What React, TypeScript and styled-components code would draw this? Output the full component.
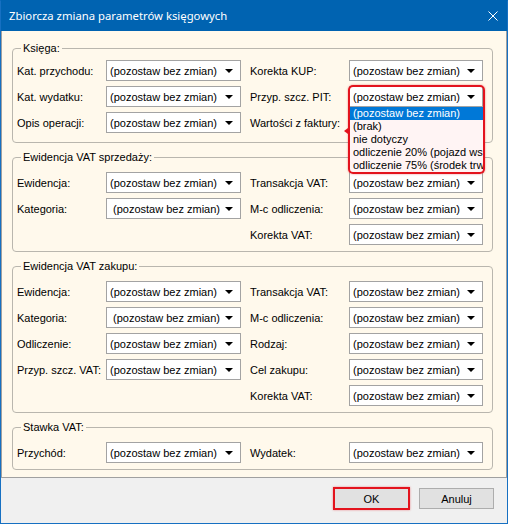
import { FC } from 'react'
import styled, { createGlobalStyle } from 'styled-components'

const KEEP = '(pozostaw bez zmian)'

type FieldDef = { label: string; indent?: boolean; open?: boolean } | null

type GroupDef = { title: string; top?: number; rows: [FieldDef, FieldDef][] }

const GROUPS: GroupDef[] = [
	{
		title: 'Księga:',
		top: 5,
		rows: [
			[{ label: 'Kat. przychodu:' }, { label: 'Korekta KUP:' }],
			[{ label: 'Kat. wydatku:' }, { label: 'Przyp. szcz. PIT:', open: true }],
			[{ label: 'Opis operacji:' }, { label: 'Wartości z faktury:' }],
		],
	},
	{
		title: 'Ewidencja VAT sprzedaży:',
		rows: [
			[{ label: 'Ewidencja:' }, { label: 'Transakcja VAT:' }],
			[{ label: 'Kategoria:', indent: true }, { label: 'M-c odliczenia:' }],
			[null, { label: 'Korekta VAT:' }],
		],
	},
	{
		title: 'Ewidencja VAT zakupu:',
		rows: [
			[{ label: 'Ewidencja:' }, { label: 'Transakcja VAT:' }],
			[{ label: 'Kategoria:', indent: true }, { label: 'M-c odliczenia:' }],
			[{ label: 'Odliczenie:' }, { label: 'Rodzaj:' }],
			[{ label: 'Przyp. szcz. VAT:' }, { label: 'Cel zakupu:' }],
			[null, { label: 'Korekta VAT:' }],
		],
	},
	{
		title: 'Stawka VAT:',
		rows: [[{ label: 'Przychód:' }, { label: 'Wydatek:' }]],
	},
]

const PIT_OPTIONS = [
	'(pozostaw bez zmian)',
	'(brak)',
	'nie dotyczy',
	'odliczenie 20% (pojazd współużytkowany)',
	'odliczenie 75% (środek trwały)',
]

const GlobalStyle = createGlobalStyle`
	html, body {
		margin: 0;
		padding: 0;
		background: #ffffff;
	}
	* {
		box-sizing: border-box;
	}
`

const Field: FC<{ def: FieldDef; right?: boolean }> = ({ def, right }) => {
	if (!def) return <div />

	return (
		<FieldRow>
			<Label $width={right ? 99 : 89}>{def.label}</Label>
			<Combo $width={right ? 134 : 135} $indent={def.indent}>
				<ComboText>{KEEP}</ComboText>
				<Arrow />
				{def.open && (
					<>
						<DropList>
							{PIT_OPTIONS.map((option, i) => (
								<DropItem key={option} $selected={i === 0}>
									{option}
								</DropItem>
							))}
						</DropList>
						<Marker />
					</>
				)}
			</Combo>
		</FieldRow>
	)
}

const App: FC = () => {
	return (
		<>
			<GlobalStyle />
			<Window>
				<TitleBar>
					<Title>Zbiorcza zmiana parametrów księgowych</Title>
					<svg width="10" height="10" viewBox="0 0 10 10">
						<path d="M0.5 0.5 L9.5 9.5 M9.5 0.5 L0.5 9.5" stroke="#ffffff" strokeWidth="1" />
					</svg>
				</TitleBar>
				<Panel>
					{GROUPS.map((group) => (
						<Group key={group.title} $top={group.top ?? 8}>
							<Legend>{group.title}</Legend>
							<FieldGrid>
								{group.rows.map(([left, right], i) => (
									<Row key={i}>
										<Field def={left} />
										<Field def={right} right />
									</Row>
								))}
							</FieldGrid>
						</Group>
					))}
				</Panel>
				<Footer>
					<Button $marked>OK</Button>
					<Button>Anuluj</Button>
				</Footer>
			</Window>
		</>
	)
}

const Window = styled.div`
	width: 508px;
	height: 524px;
	border: 1px solid #1670c2;
	border-top-color: #0063b1;
	display: flex;
	flex-direction: column;
	font-family: 'Liberation Sans', Arial, sans-serif;
	font-size: 11px;
	color: #000000;
`

const TitleBar = styled.div`
	height: 30px;
	flex: none;
	background: #0063b1;
	display: flex;
	align-items: center;
	justify-content: space-between;
	padding: 0 9px 1px 8px;
`

const Title = styled.div`
	font-family: 'Noto Sans', 'Open Sans', sans-serif;
	font-size: 11.3px;
	color: #ffffff;
`

const Panel = styled.div`
	flex: 1;
	background: #fff9ec;
	border: 1px solid #a0a0a0;
	border-top: none;
	padding: 10px 13px 0 10px;
	display: flex;
	flex-direction: column;
	gap: 7px;
`

const Group = styled.fieldset<{ $top: number }>`
	margin: 0;
	width: 481px;
	border: 1px solid #b9b6ae;
	border-radius: 4px;
	padding: ${(p) => p.$top}px 9px ${(p) => 14 - p.$top}px 4px;
	min-width: 0;
`

const Legend = styled.legend`
	margin-left: 4px;
	padding: 0 2px;
	line-height: 14px;
	font-size: 11px;
`

const FieldGrid = styled.div`
	display: flex;
	flex-direction: column;
	gap: 5px;
`

const Row = styled.div`
	display: grid;
	grid-template-columns: 224px 233px;
	column-gap: 9px;
`

const FieldRow = styled.div`
	display: flex;
	align-items: center;
	height: 21px;
`

const Label = styled.div<{ $width: number }>`
	width: ${(p) => p.$width}px;
	flex: none;
	white-space: nowrap;
`

const Combo = styled.div<{ $width: number; $indent?: boolean }>`
	position: relative;
	width: ${(p) => p.$width}px;
	height: 21px;
	flex: none;
	background: #ffffff;
	border: 1px solid #a3a3a3;
	display: flex;
	align-items: center;
	padding-left: ${(p) => (p.$indent ? 6 : 3)}px;
	padding-right: 7px;
`

const ComboText = styled.div`
	flex: 1;
	white-space: nowrap;
	overflow: hidden;
`

const Arrow = styled.div`
	width: 0;
	height: 0;
	border-left: 4px solid transparent;
	border-right: 4px solid transparent;
	border-top: 4px solid #000000;
	margin-top: 1px;
`

const DropList = styled.div`
	position: absolute;
	top: 20px;
	left: -1px;
	width: 135px;
	background: #fff4f4;
	border-bottom: 1px solid #c8a0a0;
	overflow: hidden;
	z-index: 5;
`

const DropItem = styled.div<{ $selected?: boolean }>`
	height: 13px;
	line-height: 13px;
	padding-left: 4px;
	white-space: nowrap;
	background: ${(p) => (p.$selected ? '#0078d7' : 'transparent')};
	color: ${(p) => (p.$selected ? '#ffffff' : '#000000')};
`

const Marker = styled.div`
	position: absolute;
	top: -2px;
	left: -2px;
	width: 137px;
	height: 89px;
	border: 2px solid #e3131d;
	border-radius: 5px;
	box-shadow: 0 0 2px rgba(227, 19, 29, 0.55);
	pointer-events: none;
	z-index: 6;

	&::before {
		content: '';
		position: absolute;
		left: -6px;
		top: 41px;
		width: 0;
		height: 0;
		border-top: 3px solid transparent;
		border-bottom: 3px solid transparent;
		border-right: 4px solid #e3131d;
	}
`

const Footer = styled.div`
	height: 45px;
	flex: none;
	background: #f0f0f0;
	display: flex;
	justify-content: flex-end;
	align-items: flex-start;
	gap: 10px;
	padding: 10px 13px 0 0;
`

const Button = styled.button<{ $marked?: boolean }>`
	width: 75px;
	height: 21px;
	padding: 0;
	background: #e1e1e1;
	border: 1px solid #adadad;
	font-family: 'Liberation Sans', Arial, sans-serif;
	font-size: 11px;
	color: #000000;
	${(p) =>
		p.$marked &&
		`
		border-color: #0078d7;
		outline: 2px solid #e3131d;
		outline-offset: -1px;
		box-shadow: 0 0 2px 1px rgba(227, 19, 29, 0.45);
	`}
`

export default App
